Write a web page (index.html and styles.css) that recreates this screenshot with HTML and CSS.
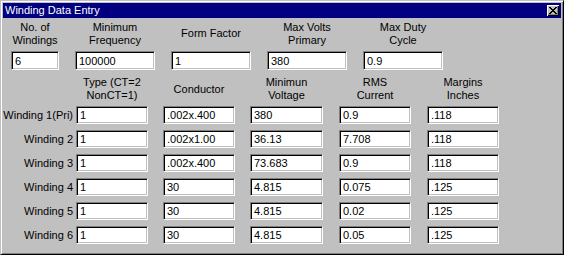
FILE: index.html
```html
<!DOCTYPE html>
<html lang="en">
<head>
    <meta charset="UTF-8">
    <meta name="viewport" content="width=device-width, initial-scale=1.0">
    <title>Winding Data Entry</title>
    <link rel="stylesheet" href="styles.css">
</head>
<body>
    <div class="window">
        <div class="title-bar">
            <span class="title-text">Winding Data Entry</span>
            <button class="close-btn" aria-label="Close">
                <svg width="8" height="7" viewBox="0 0 8 7" shape-rendering="crispEdges">
                    <path d="M0 0h2v1h-2z M6 0h2v1h-2z M1 1h2v1h-2z M5 1h2v1h-2z M2 2h4v1h-4z M3 3h2v1h-2z M2 4h4v1h-4z M1 5h2v1h-2z M5 5h2v1h-2z M0 6h2v1h-2z M6 6h2v1h-2z" fill="#000"/>
                </svg>
            </button>
        </div>

        <div class="top-fields">
            <div class="field">
                <div class="field-label">No. of<br>Windings</div>
                <input type="text" class="entry" value="6">
            </div>
            <div class="field">
                <div class="field-label">Minimum<br>Frequency</div>
                <input type="text" class="entry" value="100000">
            </div>
            <div class="field">
                <div class="field-label">Form Factor</div>
                <input type="text" class="entry" value="1">
            </div>
            <div class="field">
                <div class="field-label">Max Volts<br>Primary</div>
                <input type="text" class="entry" value="380">
            </div>
            <div class="field">
                <div class="field-label">Max Duty<br>Cycle</div>
                <input type="text" class="entry" value="0.9">
            </div>
        </div>

        <div class="winding-grid" id="windingGrid">
            <div></div>
            <div class="col-head">Type (CT=2<br>NonCT=1)</div>
            <div class="col-head">Conductor</div>
            <div class="col-head wide">Minimun<br>Voltage</div>
            <div class="col-head">RMS<br>Current</div>
            <div class="col-head">Margins<br>Inches</div>
        </div>
    </div>

    <script>
        const windings = [
            { name: 'Winding 1(Pri)', type: '1', conductor: '.002x.400', voltage: '380', current: '0.9', margins: '.118' },
            { name: 'Winding 2', type: '1', conductor: '.002x1.00', voltage: '36.13', current: '7.708', margins: '.118' },
            { name: 'Winding 3', type: '1', conductor: '.002x.400', voltage: '73.683', current: '0.9', margins: '.118' },
            { name: 'Winding 4', type: '1', conductor: '30', voltage: '4.815', current: '0.075', margins: '.125' },
            { name: 'Winding 5', type: '1', conductor: '30', voltage: '4.815', current: '0.02', margins: '.125' },
            { name: 'Winding 6', type: '1', conductor: '30', voltage: '4.815', current: '0.05', margins: '.125' }
        ];

        const grid = document.getElementById('windingGrid');

        windings.forEach(w => {
            const label = document.createElement('div');
            label.className = 'row-label';
            label.textContent = w.name;
            grid.appendChild(label);

            ['type', 'conductor', 'voltage', 'current', 'margins'].forEach(key => {
                const input = document.createElement('input');
                input.type = 'text';
                input.className = 'entry cell' + (key === 'voltage' ? ' wide' : '');
                input.value = w[key];
                grid.appendChild(input);
            });
        });
    </script>
</body>
</html>
```

FILE: styles.css
```css
body {
    margin: 0;
    font-family: "Liberation Sans", Arial, sans-serif;
    font-size: 11px;
    color: #000;
}
.window {
    width: 564px;
    height: 255px;
    box-sizing: border-box;
    background-color: #c0c0c0;
    border: 1px solid;
    border-color: #c0c0c0 #000 #000 #c0c0c0;
    box-shadow: inset 1px 1px #fff, inset -1px -1px #808080;
    padding: 2px;
}
.title-bar {
    height: 15px;
    background-color: #000080;
    color: #fff;
    display: flex;
    align-items: center;
    justify-content: space-between;
    padding: 0 2px 0 2px;
}
.title-text {
    line-height: 15px;
}
.close-btn {
    width: 12px;
    height: 11px;
    padding: 0 1px 1px 0;
    border: none;
    background-color: #c0c0c0;
    box-shadow: inset 1px 1px #fff, inset -1px -1px #000, inset -2px -2px #808080;
    display: flex;
    align-items: center;
    justify-content: center;
}
.top-fields {
    display: grid;
    grid-template-columns: 48px 80px 80px 80px 80px;
    column-gap: 16px;
    padding: 1px 0 0 8px;
}
.field {
    display: flex;
    flex-direction: column;
}
.field-label {
    height: 29px;
    display: flex;
    align-items: center;
    justify-content: center;
    text-align: center;
    line-height: 13px;
    margin-bottom: 3px;
    white-space: nowrap;
}
.entry {
    box-sizing: border-box;
    height: 19px;
    width: 100%;
    margin: 0;
    padding: 0 0 0 3px;
    font-family: "Liberation Sans", Arial, sans-serif;
    font-size: 11px;
    color: #000;
    background-color: #fff;
    border: 1px solid;
    border-color: #808080 #fff #fff #808080;
    box-shadow: inset 1px 1px #000, inset -1px -1px #c0c0c0;
    outline: none;
}
.winding-grid {
    display: grid;
    grid-template-columns: 73px 87px 87px 89px 88px 88px;
    grid-template-rows: 24px repeat(6, 18px);
    row-gap: 6px;
    margin-top: 6px;
}
.col-head {
    width: 72px;
    height: 26px;
    text-align: center;
    line-height: 13px;
    display: flex;
    align-items: center;
    justify-content: center;
}
.col-head.wide {
    width: 73px;
}
.row-label {
    text-align: right;
    padding-right: 3px;
    line-height: 18px;
    white-space: nowrap;
}
.entry.cell {
    width: 72px;
    height: 18px;
}
.entry.cell.wide {
    width: 73px;
}
```
